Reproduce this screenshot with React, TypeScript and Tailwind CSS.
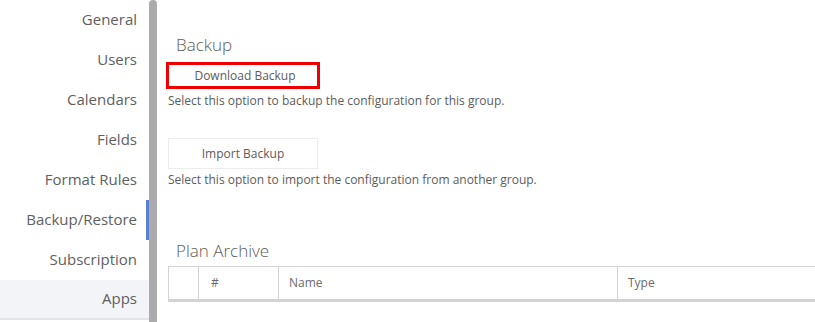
import React from "react";

const items = ["General", "Users", "Calendars", "Fields", "Format Rules", "Backup/Restore", "Subscription", "Apps"];

export default function App() {
  return (
    <div
      className="flex h-[322px] w-[815px] overflow-hidden bg-white text-[#5c5c5c]"
      style={{ fontFamily: '"Open Sans", "Liberation Sans", sans-serif' }}
    >
      <div className="flex w-[149px] shrink-0 flex-col">
        {items.map((it) => {
          const active = it === "Backup/Restore";
          const apps = it === "Apps";
          return (
            <div
              key={it}
              className={
                "flex h-10 shrink-0 items-center justify-end pb-[2px] pr-3 text-[15px] text-[#606060] " +
                (active ? "border-r-[3px] border-[#5b7fd6] pr-[9px] " : "") +
                (apps ? "border-b-2 border-[#e4e4e6] bg-[#f3f4f8] " : "")
              }
            >
              {it}
            </div>
          );
        })}
      </div>
      <div className="h-full w-2 shrink-0 rounded-t-[4px] bg-[#ababab]" />
      <div className="flex min-w-0 flex-1 flex-col pl-[11px] pt-[33px]">
        <div className="ml-2 h-6 text-[17px] font-light leading-6">Backup</div>
        <div className="-ml-[2px] mt-[5px] flex h-[27px] w-[154px] items-center justify-center border-[3px] border-[#ee0000] pl-1 text-[12px]">
          Download Backup
        </div>
        <div className="mt-[3px] h-[18px] text-[12px] leading-[18px]">
          Select this option to backup the configuration for this group.
        </div>
        <div className="mt-[28px] flex h-[31px] w-[150px] items-center justify-center border border-[#ececec] text-[12px]">
          Import Backup
        </div>
        <div className="mt-[2px] h-[18px] text-[12px] leading-[18px]">
          Select this option to import the configuration from another group.
        </div>
        <div className="ml-2 mt-[50px] h-6 text-[17px] font-light leading-6">Plan Archive</div>
        <div className="mt-[3px] flex h-[36px] w-[700px] border-b-[3px] border-l border-t border-[#d3d3d3] text-[12px] text-[#6a6a6a]">
          <div className="w-[30px] shrink-0 border-r border-[#d3d3d3]" />
          <div className="flex w-[80px] shrink-0 items-center border-r border-[#d3d3d3] pl-3">#</div>
          <div className="flex w-[339px] shrink-0 items-center border-r border-[#d3d3d3] pl-[10px]">Name</div>
          <div className="flex flex-1 items-center pl-[10px]">Type</div>
        </div>
      </div>
    </div>
  );
}
